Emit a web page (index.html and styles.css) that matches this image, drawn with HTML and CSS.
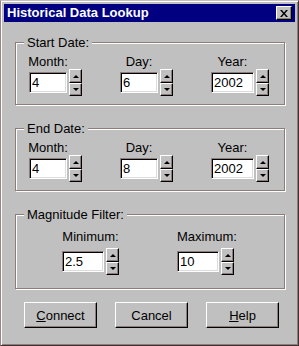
FILE: index.html
```html
<!DOCTYPE html>
<html lang="en">
<head>
<meta charset="UTF-8" />
<title>Historical Data Lookup</title>
<link rel="stylesheet" href="styles.css">
</head>
<body>

<div class="window">
  <div class="titlebar">
    <span class="title">Historical Data Lookup</span>
    <button class="close" aria-label="Close">
      <svg width="8" height="7" viewBox="0 0 8 7"><path d="M0 0h2l2 2.4L6 0h2L5 3.5 8 7H6L4 4.6 2 7H0l3-3.5z" fill="#000"/></svg>
    </button>
  </div>

  <div class="content">
    <fieldset class="group">
      <legend>Start Date:</legend>
      <div class="fields dates">
        <div class="spinfield">
          <span class="lbl">Month:</span>
          <div class="ctl"><input class="txt w38" value="4"><div class="spin"><span class="up"></span><span class="down"></span></div></div>
        </div>
        <div class="spinfield">
          <span class="lbl">Day:</span>
          <div class="ctl"><input class="txt w38" value="6"><div class="spin"><span class="up"></span><span class="down"></span></div></div>
        </div>
        <div class="spinfield">
          <span class="lbl">Year:</span>
          <div class="ctl"><input class="txt w43" value="2002"><div class="spin"><span class="up"></span><span class="down"></span></div></div>
        </div>
      </div>
    </fieldset>

    <fieldset class="group">
      <legend>End Date:</legend>
      <div class="fields dates">
        <div class="spinfield">
          <span class="lbl">Month:</span>
          <div class="ctl"><input class="txt w38" value="4"><div class="spin"><span class="up"></span><span class="down"></span></div></div>
        </div>
        <div class="spinfield">
          <span class="lbl">Day:</span>
          <div class="ctl"><input class="txt w38" value="8"><div class="spin"><span class="up"></span><span class="down"></span></div></div>
        </div>
        <div class="spinfield">
          <span class="lbl">Year:</span>
          <div class="ctl"><input class="txt w43" value="2002"><div class="spin"><span class="up"></span><span class="down"></span></div></div>
        </div>
      </div>
    </fieldset>

    <fieldset class="group magnitude">
      <legend>Magnitude Filter:</legend>
      <div class="fields mags">
        <div class="spinfield">
          <span class="lbl">Minimum:</span>
          <div class="ctl"><input class="txt w42" value="2.5"><div class="spin"><span class="up"></span><span class="down"></span></div></div>
        </div>
        <div class="spinfield">
          <span class="lbl">Maximum:</span>
          <div class="ctl"><input class="txt w42" value="10"><div class="spin"><span class="up"></span><span class="down"></span></div></div>
        </div>
      </div>
    </fieldset>

    <div class="buttons">
      <button class="btn"><u>C</u>onnect</button>
      <button class="btn">Cancel</button>
      <button class="btn"><u>H</u>elp</button>
    </div>
  </div>
</div>

</body>
</html>
```

FILE: styles.css
```css
body {
  margin: 0;
  background: #c0c0c0;
  font-family: 'Liberation Sans', Arial, sans-serif;
  font-size: 13px;
  color: #000;
}
.window {
  width: 299px;
  height: 346px;
  box-sizing: border-box;
  background: #c0c0c0;
  border-top: 1px solid #c8c0c0;
  border-left: 1px solid #9c8484;
  border-right: 1px solid #403030;
  border-bottom: 1px solid #403030;
  box-shadow: inset 1px 1px 0 #fff, inset -1px -1px 0 #8c7c7c;
  padding: 3px 3px 0 3px;
}
/* Barra de titulo */
.titlebar {
  height: 18px;
  background: #000080;
  display: flex;
  align-items: center;
  justify-content: space-between;
  padding: 0 3px;
}
.title {
  color: #fff;
  font-weight: bold;
  font-size: 13px;
  line-height: 18px;
}
.close {
  width: 16px;
  height: 14px;
  padding: 0;
  margin: 0;
  background: #c0c0c0;
  border-top: 1px solid #fff;
  border-left: 1px solid #fff;
  border-right: 1px solid #000;
  border-bottom: 1px solid #000;
  box-shadow: inset -1px -1px 0 #8c7c7c;
  display: flex;
  align-items: center;
  justify-content: center;
}
/* Conteudo */
.content {
  padding: 13px 10px 0 11px;
}
.group {
  margin: 0 0 16px 0;
  padding: 0;
  min-inline-size: 0;
  border: 1px solid #8c7c7c;
  box-shadow: inset 1px 1px 0 #fff, 1px 1px 0 #fff;
}
.group legend {
  margin-left: 8px;
  padding: 0 3px 0 3px;
  line-height: 15px;
  background: #c0c0c0;
}
.magnitude {
  margin-top: 1px;
}
.fields {
  display: flex;
}
.dates {
  gap: 38px;
  padding: 4px 0 8px 13px;
}
.mags {
  gap: 58px;
  padding: 7px 0 13px 46px;
}
.spinfield {
  display: flex;
  flex-direction: column;
}
.lbl {
  line-height: 15px;
  text-align: center;
  white-space: nowrap;
}
.dates .lbl {
  margin: 0 13px 0 -2px;
}
.mags .lbl {
  margin-bottom: 4px;
}
.ctl {
  display: flex;
  align-items: center;
  gap: 2px;
}
.txt {
  box-sizing: border-box;
  height: 21px;
  margin: 0;
  padding: 0 2px;
  font-family: 'Liberation Sans', Arial, sans-serif;
  font-size: 13px;
  color: #000;
  background: #fff;
  border-top: 1px solid #8c7c7c;
  border-left: 1px solid #8c7c7c;
  border-right: 1px solid #fff;
  border-bottom: 1px solid #fff;
  box-shadow: inset 1px 1px 0 #000, inset -1px -1px 0 #dcdcdc;
  outline: none;
}
.w38 { width: 38px; }
.w42 { width: 42px; }
.w43 { width: 43px; }
/* Botoes do spin */
.spin {
  display: flex;
  flex-direction: column;
}
.spin span {
  width: 13px;
  box-sizing: border-box;
  background: #c0c0c0;
  border-top: 1px solid #fff;
  border-left: 1px solid #fff;
  border-right: 1px solid #000;
  border-bottom: 1px solid #000;
  box-shadow: inset -1px -1px 0 #8c7c7c;
  display: flex;
  align-items: center;
  justify-content: center;
}
.spin .up { height: 14px; }
.spin .down { height: 13px; }
.spin .up::after {
  content: '';
  width: 0;
  height: 0;
  border-left: 3px solid transparent;
  border-right: 3px solid transparent;
  border-bottom: 3px solid #000;
}
.spin .down::after {
  content: '';
  width: 0;
  height: 0;
  border-left: 3px solid transparent;
  border-right: 3px solid transparent;
  border-top: 3px solid #000;
}
/* Botoes de baixo */
.buttons {
  display: flex;
  gap: 18px;
  padding-left: 9px;
  margin-top: -3px;
}
.btn {
  width: 73px;
  height: 26px;
  margin: 0;
  padding: 0;
  font-family: 'Liberation Sans', Arial, sans-serif;
  font-size: 13px;
  color: #000;
  background: #c0c0c0;
  border-top: 1px solid #fff;
  border-left: 1px solid #fff;
  border-right: 1px solid #000;
  border-bottom: 1px solid #000;
  box-shadow: inset -1px -1px 0 #8c7c7c;
}
```
